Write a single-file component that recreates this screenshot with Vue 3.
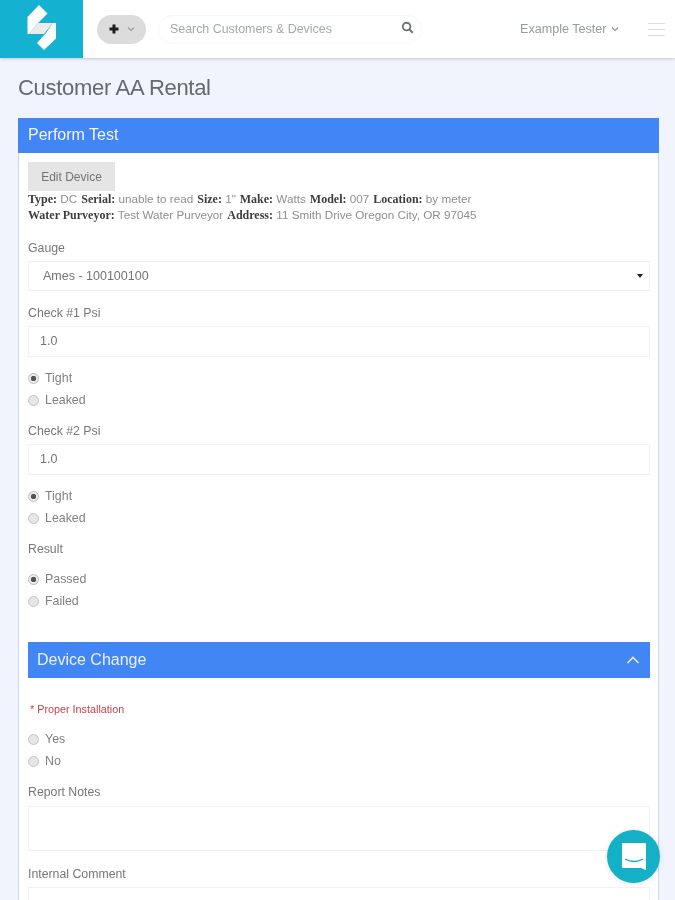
<script setup>
const info1 = [['Type:', 'DC'], ['Serial:', 'unable to read'], ['Size:', '1"'], ['Make:', 'Watts'], ['Model:', '007'], ['Location:', 'by meter']]
const info2 = [['Water Purveyor:', 'Test Water Purveyor'], ['Address:', '11 Smith Drive Oregon City, OR 97045']]
</script>

<template>
  <div class="page">
    <header class="topbar">
      <div class="logo">
        <svg width="83" height="58" viewBox="0 0 83 58">
          <path d="M39 5 L47.500 13.500 L38 23 L29 34 L27.500 34 L27.500 17 Z" fill="#fff" />
          <path d="M29 34 L38 23 L53 23 L44 34 Z" fill="#ebebeb" />
          <path d="M53 23 L56 23 L56 38.500 L44 50 L37 43 L46 33 Z" fill="#fff" />
        </svg>
      </div>
      <button class="add">
        <svg width="10" height="10" viewBox="0 0 10 10"><path d="M5 0.500 V9.500 M0.500 5 H9.500" stroke="#1c1c1c" stroke-width="3" /></svg>
        <svg width="8" height="6" viewBox="0 0 8 6"><path d="M1 1.500 L4 4.500 L7 1.500" fill="none" stroke="#999" stroke-width="1.100" /></svg>
      </button>
      <div class="search">
        <span>Search Customers &amp; Devices</span>
        <svg width="13" height="13" viewBox="0 0 14 14"><circle cx="6" cy="6" r="4.100" fill="none" stroke="#6e7274" stroke-width="2" /><path d="M9 9 L12.600 12.600" stroke="#6e7274" stroke-width="2.200" /></svg>
      </div>
      <div class="user">
        Example Tester
        <svg width="8" height="6" viewBox="0 0 8 6"><path d="M1 1.500 L4 4.500 L7 1.500" fill="none" stroke="#8b9698" stroke-width="1.100" /></svg>
      </div>
      <div class="burger"><i></i><i></i><i></i></div>
    </header>

    <main class="content">
      <h1>Customer AA Rental</h1>
      <section class="panel">
        <div class="panel-head">Perform Test</div>
        <div class="panel-body">
          <button class="edit">Edit Device</button>
          <div class="info">
            <div class="info-line"><span v-for="p in info1" :key="p[0]"><b>{{ p[0] }}</b> {{ p[1] }}</span></div>
            <div class="info-line"><span v-for="p in info2" :key="p[0]"><b>{{ p[0] }}</b> {{ p[1] }}</span></div>
          </div>

          <label class="lbl gauge">Gauge</label>
          <div class="field select">Ames - 100100100<span class="caret"></span></div>

          <label class="lbl">Check #1 Psi</label>
          <div class="field num">1.0</div>
          <div class="radios">
            <div class="radio on"><i></i>Tight</div>
            <div class="radio"><i></i>Leaked</div>
          </div>

          <label class="lbl after-radio">Check #2 Psi</label>
          <div class="field num">1.0</div>
          <div class="radios">
            <div class="radio on"><i></i>Tight</div>
            <div class="radio"><i></i>Leaked</div>
          </div>

          <label class="lbl after-radio">Result</label>
          <div class="radios result">
            <div class="radio on"><i></i>Passed</div>
            <div class="radio"><i></i>Failed</div>
          </div>

          <div class="sub-head">
            <span>Device Change</span>
            <svg width="14" height="8" viewBox="0 0 14 8"><path d="M1.500 7 L7 1.500 L12.500 7" fill="none" stroke="#e4edfd" stroke-width="1.600" /></svg>
          </div>

          <div class="required">* Proper Installation</div>
          <div class="radios yesno">
            <div class="radio"><i></i>Yes</div>
            <div class="radio"><i></i>No</div>
          </div>

          <label class="lbl after-radio notes">Report Notes</label>
          <div class="field area"></div>
          <label class="lbl after-area">Internal Comment</label>
          <div class="field area"></div>
        </div>
      </section>
    </main>

    <div class="chat">
      <svg width="24" height="27" viewBox="0 0 24 27">
        <path d="M1 0 H23 Q24 0 24 1 V27 L19 25 H1 Q0 25 0 24 V1 Q0 0 1 0 Z" fill="#fff" />
        <path d="M3 16 Q12 21 21 16" fill="none" stroke="#14b1c6" stroke-width="1.300" />
      </svg>
    </div>
  </div>
</template>

<style>
html, body { margin: 0; overflow: hidden; }
</style>

<style scoped>
.page {
  height: 900px;
  overflow: hidden;
  background: #f1f3fd;
  font-family: "Liberation Sans", Arial, sans-serif;
  color: #666;
  position: relative;
  filter: blur(0.4px);
}
.topbar {
  height: 58px;
  background: #fff;
  display: flex;
  align-items: center;
  box-shadow: 0 1px 3px rgba(0, 0, 0, 0.18);
}
.logo {
  width: 83px;
  height: 58px;
  background: #14b1d0;
  flex: none;
}
.logo svg { display: block; }
.add {
  margin-left: 14px;
  width: 49px;
  height: 29px;
  border: 0;
  border-radius: 15px;
  background: #dcdcdc;
  display: flex;
  align-items: center;
  justify-content: center;
  gap: 8px;
  padding: 0;
}
.search {
  margin-left: 12px;
  width: 264px;
  height: 29px;
  box-sizing: border-box;
  border: 1px solid #f7f7f7;
  border-radius: 15px;
  padding: 0 7px 0 11px;
  display: flex;
  align-items: center;
  justify-content: space-between;
  font-size: 12.400px;
  color: #a3a9ab;
}
.search svg { margin-top: -3px; }
.user {
  margin-left: 98px;
  font-size: 12.600px;
  color: #939d9f;
  display: flex;
  align-items: center;
  gap: 4px;
  white-space: nowrap;
}
.burger {
  margin-left: 29px;
  width: 17px;
  display: flex;
  flex-direction: column;
  gap: 5px;
}
.burger i { display: block; height: 1px; background: #dcdcdc; }
.content { padding: 16px 16px 0 18px; }
h1 {
  margin: 0 0 16px;
  font-size: 22px;
  line-height: 28px;
  font-weight: 400;
  letter-spacing: -0.3px;
  color: #666a6d;
}
.panel {
  background: #fff;
  border: 1px solid #c9d8f3;
  border-top: 0;
  border-bottom: 0;
}
.panel-head {
  margin: 0 -1px;
  height: 35px;
  background: #4285f4;
  color: #f2f6fe;
  font-size: 16px;
  line-height: 34px;
  padding-left: 10px;
}
.panel-body { padding: 9px 8px 0 9px; }
.edit {
  display: block;
  width: 87px;
  height: 29px;
  border: 0;
  background: #e5e5e5;
  color: #737373;
  font: 12px "Liberation Sans", sans-serif;
  padding: 0;
}
.info {
  font-size: 11.700px;
  line-height: 16px;
  color: #8f8f8f;
  white-space: nowrap;
}
.info-line { display: flex; gap: 4px; }
.info b { font-family: "Liberation Serif", serif; color: #3d3d3d; font-size: 12px; }
.lbl {
  display: block;
  font-size: 12.300px;
  line-height: 14px;
  color: #777;
  margin: 15px 0 6px;
}
.gauge { margin-top: 18px; }
.after-radio { margin-top: 13px; }
.notes { margin-bottom: 7px; }
.after-area { margin-top: 16px; }
.field {
  height: 31px;
  box-sizing: border-box;
  border: 1px solid #f2f2f2;
  font-size: 12.500px;
  line-height: 29px;
  padding-left: 14px;
  color: #747474;
  position: relative;
}
.num { padding-left: 11px; }
.select { height: 30px; line-height: 28px; }
.caret {
  position: absolute;
  right: 6px;
  top: 12px;
  border: 3px solid transparent;
  border-top: 4px solid #222;
  border-bottom: 0;
}
.radios { margin-top: 10px; }
.radio {
  height: 22px;
  display: flex;
  align-items: center;
  font-size: 12.400px;
  color: #808080;
}
.radio i {
  width: 9px;
  height: 9px;
  margin-right: 6px;
  border: 1px solid #c4c4c4;
  border-radius: 50%;
  background: #e6e6e6;
  flex: none;
}
.radio.on i { background: radial-gradient(circle, #555 0 2.500px, #ececec 3px); border-color: #bbb; }
.result { margin-top: 12px; }
.sub-head {
  margin-top: 30px;
  height: 36px;
  background: #4285f4;
  color: #eaf1fe;
  font-size: 16px;
  display: flex;
  align-items: center;
  justify-content: space-between;
  padding: 0 10px 0 9px;
}
.required {
  margin-top: 25px;
  font-size: 10.800px;
  line-height: 12px;
  color: #c8414b;
  padding-left: 2px;
}
.yesno { margin-top: 13px; }
.area { height: 45px; }
.chat {
  position: absolute;
  left: 607px;
  top: 830px;
  width: 53px;
  height: 53px;
  border-radius: 50%;
  background: #14b1c6;
  display: flex;
  align-items: center;
  justify-content: center;
  box-shadow: 0 1px 6px rgba(0, 0, 0, 0.1);
}
</style>
